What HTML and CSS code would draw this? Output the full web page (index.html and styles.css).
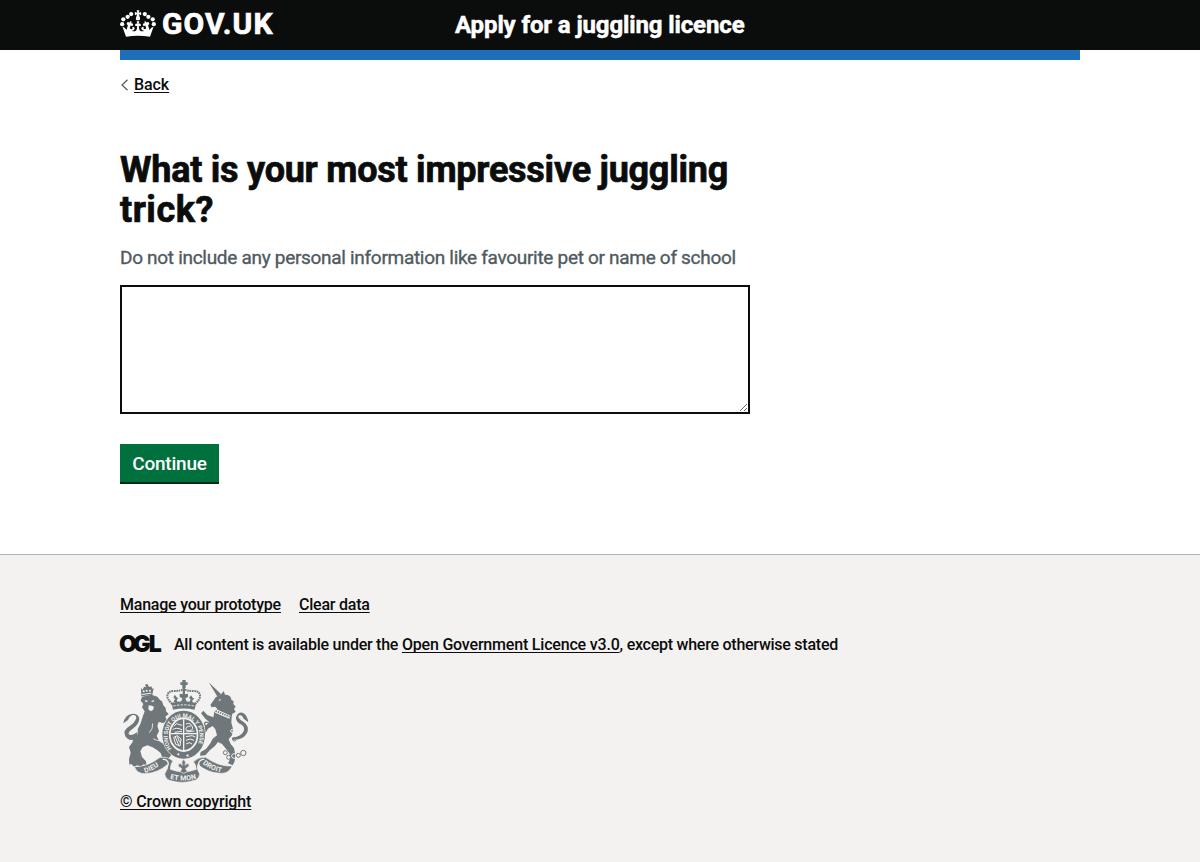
FILE: index.html
```html
<!DOCTYPE html>
<html lang="en">
<head>
<meta charset="utf-8">
<title>Apply for a juggling licence</title>
<link rel="stylesheet" href="styles.css">
</head>
<body>
<header class="header">
  <div class="container header-row">
    <a class="logo" href="#">
      <svg class="crown" viewBox="0 0 132 97" fill="#fff" aria-hidden="true">
        <circle cx="28" cy="24" r="7.8"/><circle cx="12" cy="33" r="7.8"/><circle cx="8" cy="51" r="7.800"/><circle cx="41" cy="14" r="7.800"/>
        <circle cx="104" cy="24" r="7.800"/><circle cx="120" cy="33" r="7.800"/><circle cx="124" cy="51" r="7.800"/><circle cx="91" cy="14" r="7.800"/>
        <path d="M61 0h10l-2.500 9 9-3v12l-8.500-3.500 4.500 13.500q2 9-7.500 9t-7.500-9l4.500-13.500-8.500 3.500V6l9 3z"/>
        <path d="M22 97 9 60q9 1 15 12l5-17q-6-2-4-8 4-7 10-1l2-6 6 2-2 6q9-1 7 7-3 5-9 1l-3 10q4 5 8 3 4-3 1-8 8-2 9 6-1 8-11 8 9 5 16-1 4-5 4-17-6 4-8-3 1-8 9-5l-3-9h10l-3 9q8-3 9 5-2 7-8 3 0 12 4 17 7 6 16 1-10 0-11-8 1-8 9-6-3 5 1 8 4 2 8-3l-3-10q-6 4-9-1-2-8 7-7l-2-6 6-2 2 6q6-6 10 1 2 6-4 8l5 17q6-11 15-12l-13 37q-44-7-88 0z"/>
      </svg>
      <span class="logo-text">GOV.UK</span>
    </a>
    <a class="service" href="#">Apply for a juggling licence</a>
  </div>
</header>
<div class="container">
  <div class="blue-bar"></div>
  <a class="back" href="#"><svg viewBox="0 0 8 12" width="8" height="12"><path d="M6.500.7 1 6l5.500 5.300" fill="none" stroke="#505a5f" stroke-width="1.200"/></svg><span>Back</span></a>
  <main class="main">
    <h1 class="heading"><span class="h-a">What is your most impressive juggling</span> <span class="h-b">trick?</span></h1>
    <p class="hint">Do not include any personal information like favourite pet or name of school</p>
    <textarea class="textarea" aria-label="Trick"></textarea>
    <button class="button">Continue</button>
  </main>
</div>
<footer class="footer">
  <div class="container">
    <nav class="links"><a href="#">Manage your prototype</a><a href="#">Clear data</a></nav>
    <div class="licence"><span class="ogl"><b class="ogl-o">O</b><b class="ogl-g">G</b><b class="ogl-l">L</b></span><span class="licence-text">All content is available under the <a class="licence-link" href="#">Open Government Licence v3.0</a>, except where otherwise stated</span></div>
    <a class="copyright" href="#">
      <svg class="arms" viewBox="6 9 390 315" fill="#6f777b" aria-hidden="true">
        <!-- lion -->
        <path d="M69 36l5 5 4-9 6 1 5-6 5 6 6-2 3 8 4-4-4 22-33 4z"/>
        <circle cx="86" cy="28" r="4"/>
        <g fill="#f3f2f1"><circle cx="77" cy="46" r="3"/><circle cx="86" cy="44" r="3"/><circle cx="96" cy="44" r="3"/><path d="M71 54l29-4v3l-29 4z"/></g>
        <path d="M72 62 100 56 118 62 126 72 132 76 136 88 143 96 144 106 152 114 142 122 148 134 136 141 122 138 118 150 123 165 116 180 124 196 140 206 150 220 160 236 152 247 132 243 128 231 118 223 104 214 88 208 74 214 67 226 72 243 84 256 85 268 76 265 70 273 58 268 48 272 40 264 34 266 33 250 38 230 33 213 44 198 46 182 60 176 59 160 68 142 74 122 80 106 72 94 76 84 68 74z"/>
        <path d="M60 186q-26 14-38-5-9-18 12-30 16-10 21-25 0-11-12-9-10 4-13 15l-14 10q4-26 27-29 20 0 21 16-2 16-17 27-18 12-15 18 7 8 26-6z"/>
        <path d="M82 72l8 3-3 3-7-2zm18 3 9-3-2 5-6 1zM92 88l10 1 6 4-3 9-7 4-7-6z" fill="#f3f2f1"/>
        <path d="M104 142q2 16-10 28m12 18q10 6 18 6" fill="none" stroke="#f3f2f1" stroke-width="2.500"/>
        <!-- unicorn -->
        <path d="M272 19 309 54 299 63z"/>
        <path d="M300 60 310 54 317 45 321 56 330 57 338 63 340 71 347 76 346 84 353 92 348 98 353 108 343 113 341 124 340 140 345 158 342 178 332 190 338 204 348 216 352 236 350 256 344 268 330 262 338 246 334 232 322 216 312 204 300 198 290 211 276 222 262 238 246 239 248 228 264 219 277 202 284 188 297 178 292 160 284 150 270 158 262 172 252 168 260 152 274 138 262 128 249 112 256 104 268 117 286 124 289 108 298 98 291 92 281 94 277 87 286 74 293 64z"/>
        <path d="M301 72l8-3-3 6zM294 99l44 20-4 9-43-18z" fill="#f3f2f1"/>
        <path d="M293 105l42 17" stroke="#6f777b" stroke-width="5" stroke-dasharray="4 3" fill="none"/>
        <path d="M342 185q26-3 34-18t-11-24q-12-8-11-19 5-16 19-14 14 3 18 29l-14-11q-5-12-13-10-8 5 5 15 28 15 18 38-12 23-45 20z"/>
        <path d="M272 140q-18-6-10 9t-12 13" fill="none" stroke="#6f777b" stroke-width="4"/>
        <g fill="none" stroke="#6f777b" stroke-width="3"><circle cx="322" cy="230" r="6"/><circle cx="332" cy="244" r="6"/><circle cx="348" cy="240" r="7" stroke="#f3f2f1"/><circle cx="361" cy="238" r="6"/><circle cx="376" cy="231" r="8"/><circle cx="343" cy="165" r="5" stroke="#f3f2f1"/><circle cx="349" cy="190" r="5"/></g>
        <!-- crown -->
        <path d="M193 12h10v7h6v8h-6v9h-10v-9h-6v-8h6z"/>
        <path d="M163 84q-16-14-15-26 3-13 20-13 20 0 29-6 9 6 29 6 18 0 20 13 1 12-15 26z" fill="#f3f2f1" stroke="#6f777b" stroke-width="6" stroke-dasharray="5 2"/>
        <path d="M194 36h7v20h-7zM188 82l5-15-8-4v-10l10 2 2-9 5 9 8-2v10l-8 4 6 15zM166 79l5-10-5-5 5-8 5 8 5 3-5 5 4 9zM213 81l5-11-5-4 6-8 5 7 5 3-6 5 1 9z"/>
        <path d="M161 81q36-10 73 0l-4 20q-32-7-65 0z"/>
        <path d="M166 90q31-7 63 0" stroke="#f3f2f1" stroke-width="3" stroke-dasharray="7 4" fill="none"/>
        <!-- garter and shield -->
        <ellipse cx="197" cy="176" rx="66" ry="74" fill="#f3f2f1"/>
        <ellipse cx="197" cy="176" rx="54" ry="62" fill="none" stroke="#6f777b" stroke-width="20"/>
        <path id="garter-band" d="M163 220A48 56 0 1 1 231 220" fill="none"/>
        <text class="garter-text" fill="#f3f2f1"><textPath href="#garter-band" startOffset="3">HONI SOIT QUI MAL Y PENSE</textPath></text>
        <ellipse cx="197" cy="176" rx="43" ry="50" fill="#f3f2f1"/>
        <ellipse cx="197" cy="176" rx="39" ry="46"/>
        <path d="M197 130v92M157 173h80" stroke="#f3f2f1" stroke-width="4"/>
        <path d="M167 151l8-8 17 5M164 161q10-8 28 0M170 169l22-3M204 144q14-6 19 8t-18 12q-6-13 14-14M205 168l24-3M167 184l11-5 11 10-3 21-13-5zM172 183l10 24M178 181l7 18M204 182l18-3 10 4M204 193q13-8 24 0M204 204q11-8 18 0" fill="none" stroke="#f3f2f1" stroke-width="3"/>
        <path d="M176 235l7-4 1 8zM203 240l7-6 3 8z" fill="#f3f2f1"/>
        <!-- motto scroll -->
        <path d="M49 272q38 2 77-28 25-3 39 12-7 5-8 24 40 15 78 0-2-17-9-23 16-15 37-13 41 29 80 26-11 24-37 22-38-2-67-27-4 15 6 28-1 14-12 19-39 14-79 1-12-4-14-19 9-13 8-28-28 25-68 27-23 0-31-21z" stroke="#f3f2f1" stroke-width="2"/>
        <path d="M134 250q15-1 17 13l-5 17M259 250q-15 0-17 13l4 17" fill="none" stroke="#f3f2f1" stroke-width="4"/>
        <path id="scroll-left" d="M79 291Q110 283 142 256" fill="none"/><path id="scroll-mid" d="M152 307Q197 321 246 305" fill="none"/><path id="scroll-right" d="M252 262Q280 286 322 291" fill="none"/>
        <g class="scroll-text" fill="#f3f2f1"><text><textPath href="#scroll-left" startOffset="2">DIEU</textPath></text><text><textPath href="#scroll-mid" startOffset="4">ET MON</textPath></text><text><textPath href="#scroll-right" startOffset="2">DROIT</textPath></text></g>
        <path d="M197 250q9 8 4 18 6-9 12-3 3 8-8 11l-2 3 6 8-12 5-11-5 5-8-2-3q-11-3-8-11 6-6 12 3-5-10 4-18z" stroke="#f3f2f1" stroke-width="2"/>
      </svg>
      <span class="copy-text">© Crown copyright</span>
    </a>
  </div>
</footer>
</body>
</html>
```
FILE: styles.css
```css
* { box-sizing: border-box; }
body { margin: 0; background: #fff; color: #0b0c0c; font-family: Roboto, Arial, sans-serif; font-weight: 500; }
a { color: inherit; text-decoration: underline; text-decoration-thickness: 1px; text-underline-offset: 2px; text-decoration-skip-ink: none; }
.container { width: 960px; margin: 0 auto; }
.header { background: #0b0c0c; height: 50px; color: #fff; }
.header-row { display: flex; align-items: flex-start; }
.logo { display: flex; width: 335px; text-decoration: none; }
.crown { width: 36px; height: 27px; margin-top: 10px; }
.logo-text { margin: 6px 0 0 6px; font-size: 30px; line-height: 36px; font-weight: 700; letter-spacing: 1.15px; -webkit-text-stroke: 0.7px #fff; }
.service { margin-top: 10px; font-size: 24px; line-height: 30px; font-weight: 700; letter-spacing: -0.12px; -webkit-text-stroke: 0.5px #fff; text-decoration: none; white-space: nowrap; }
.blue-bar { height: 10px; background: #1d70b8; }
.back { display: flex; width: max-content; align-items: center; gap: 5px; margin: 15px 0 0 1px; font-size: 16px; line-height: 20px; letter-spacing: -0.1px; }
.main { padding: 55px 0 70px; width: 630px; }
.heading { margin: 0 0 15px; font-size: 36px; line-height: 40px; font-weight: 700; white-space: nowrap; -webkit-text-stroke: 0.7px #0b0c0c; }
.h-a, .h-b { display: block; }
.h-a { letter-spacing: -0.25px; }
.h-b { letter-spacing: 0.5px; }
.hint { margin: 0 0 15px; font-size: 19px; line-height: 25px; font-weight: 400; letter-spacing: -0.3px; -webkit-text-stroke: 0.35px #505a5f; color: #505a5f; white-space: nowrap; }
.textarea { display: block; width: 630px; height: 129px; border: 2px solid #0b0c0c; border-radius: 0; background: #fff; outline: 0; resize: vertical; }
.button { display: block; width: 99px; height: 38px; margin: 30px 0 2px; padding: 1px 0 0; border: 0; background: #00703c; box-shadow: 0 2px 0 #002d18; color: #fff; font: 500 19px/37px Roboto, Arial, sans-serif; letter-spacing: -0.2px; }
.footer { height: 308px; padding-top: 40px; border-top: 1px solid #b1b4b6; background: #f3f2f1; font-size: 16px; line-height: 20px; }
.links { display: flex; gap: 18px; letter-spacing: -0.22px; }
.licence { display: flex; margin-top: 20px; height: 20px; white-space: nowrap; }
.licence-text { letter-spacing: -0.25px; }
.licence-link { letter-spacing: -0.19px; }
.ogl { display: flex; width: 54px; font: 900 23px/18px Inter, Arial, sans-serif; }
.ogl-o { margin-left: -1px; }
.ogl-g { margin-left: -3.5px; }
.ogl-l { margin-left: -2px; }
.copyright { display: flex; flex-direction: column; width: max-content; margin-top: 24px; letter-spacing: -0.13px; }
.arms { width: 130px; height: 105px; margin-bottom: 8px; }
.garter-text { font: 700 17px Roboto, sans-serif; letter-spacing: 0; }
.scroll-text { font: 700 21px Roboto, sans-serif; letter-spacing: 0.5px; }
```
